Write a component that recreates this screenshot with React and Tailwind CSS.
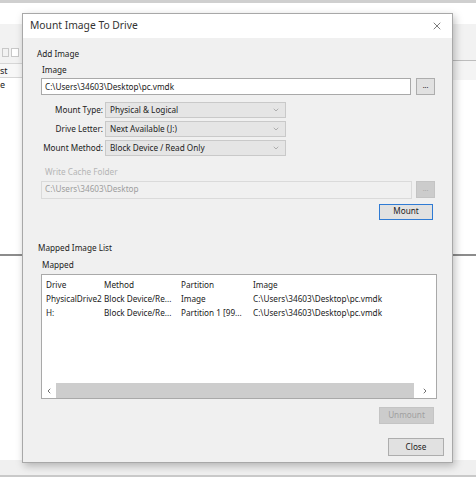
import { ChevronDown, X, ChevronLeft, ChevronRight } from "lucide-react";

const font = { fontFamily: '"Noto Sans", "Open Sans", sans-serif' };

function Select({ value }) {
  return (
    <div className="flex items-center justify-between w-[181px] h-[16px] bg-[#e5e5e5] border border-[#c9c9c9] pl-[4px] pr-[5px]">
      <span>{value}</span>
      <ChevronDown size={8} strokeWidth={1.5} className="text-[#777]" />
    </div>
  );
}

function Field({ label, value }) {
  return (
    <div className="flex items-center h-[16px] mb-[3px]">
      <div className="w-[64px] flex justify-end pr-[2px] whitespace-nowrap">{label}</div>
      <Select value={value} />
    </div>
  );
}

const rows = [
  ["PhysicalDrive2", "Block Device/Re...", "Image", "C:\\Users\\34603\\Desktop\\pc.vmdk"],
  ["H:", "Block Device/Re...", "Partition 1 [99...", "C:\\Users\\34603\\Desktop\\pc.vmdk"],
];

export default function App() {
  return (
    <div className="relative w-[476px] h-[477px] bg-white overflow-hidden text-[8.2px] text-[#222]" style={font}>
      {/* window behind */}
      <div className="h-[3px] bg-[#cfcfcf]" />
      <div className="h-[21px] bg-white" />
      <div className="h-[39px] bg-[#f2f2f2] flex items-end pb-[6px] pl-[2px] gap-[2px]">
        <div className="w-[7px] h-[9px] border border-[#c8c8c8]" />
        <div className="w-[8px] h-[9px] border border-[#c8c8c8] bg-white" />
      </div>
      <div className="h-[15px] border-y border-[#d6d6d6] bg-[#f7f7f7] flex items-center text-[9px]">st</div>
      <div className="h-[14px] flex items-center text-[9px]">e</div>
      <div className="absolute left-0 right-0 top-[254px] h-[2px] bg-[#8c8c8c]" />
      <div className="absolute right-0 top-[60px] w-[24px] h-[20px] border-t border-[#bdbdbd] bg-[#f4f4f4]" />
      <div className="absolute left-0 right-0 bottom-0 h-[17px] bg-[#f0f0f0] border-b-2 border-[#c9c9c9]" />

      {/* dialog */}
      <div className="absolute left-[22px] top-[13px] w-[431px] h-[450px] bg-[#f0f0f0] border border-[#a8a8a8] shadow-[2px_3px_8px_rgba(0,0,0,0.25)] flex flex-col">
        <div className="h-[24px] bg-white flex items-center justify-between pl-[7px] pr-[9px]">
          <span className="text-[10.3px] text-[#333]">Mount Image To Drive</span>
          <X size={12} strokeWidth={1.4} className="text-[#444]" />
        </div>

        <div className="pl-[14px] pt-[12px] leading-none">Add Image</div>
        <div className="pl-[18px] pr-[17px]">
          <div className="pl-[1px] mt-[8px] leading-none">Image</div>
          <div className="flex items-center mt-[4px] gap-[5px]">
            <div className="w-[371px] h-[17px] bg-white border border-[#a9a9a9] flex items-center pl-[3px]">
              C:\Users\34603\Desktop\pc.vmdk
            </div>
            <div className="w-[19px] h-[17px] bg-[#e1e1e1] border border-[#adadad] flex items-center justify-center text-[7px] leading-none pb-[2px]">...</div>
          </div>

          <div className="mt-[7px]">
            <Field label="Mount Type:" value="Physical & Logical" />
            <Field label="Drive Letter:" value="Next Available (J:)" />
            <Field label="Mount Method:" value="Block Device / Read Only" />
          </div>

          <div className="pl-[4px] mt-[12px] leading-none text-[#b5b5b5]">Write Cache Folder</div>
          <div className="flex items-center mt-[4px] gap-[4px]">
            <div className="w-[373px] h-[18px] bg-[#f0f0f0] border border-[#dadada] flex items-center pl-[3px] text-[#9d9d9d]">
              C:\Users\34603\Desktop
            </div>
            <div className="w-[19px] h-[17px] bg-[#cccccc] border border-[#c4c4c4] flex items-center justify-center text-[7px] text-[#aaa] leading-none pb-[2px]">...</div>
          </div>
          <div className="flex justify-end mt-[5px] pr-[2px]">
            <div className="w-[54px] h-[16px] bg-[#e1e1e1] border-[1.5px] border-[#2f7bd4] flex items-center justify-center">Mount</div>
          </div>
        </div>

        <div className="pl-[15px] mt-[24px] leading-none">Mapped Image List</div>
        <div className="pl-[18px] pr-[17px]">
          <div className="pl-[1px] mt-[9px] leading-none">Mapped</div>
          <div className="mt-[5px] w-[396px] h-[125px] bg-white border border-[#a9a9a9] flex flex-col">
            <div className="flex-1 pl-[4px] pt-[3px]">
              <div className="grid grid-cols-[58px_77px_72px_1fr] h-[14px] items-center">
                <span>Drive</span><span>Method</span><span>Partition</span><span>Image</span>
              </div>
              {rows.map((r, i) => (
                <div key={i} className="grid grid-cols-[58px_77px_72px_1fr] h-[14px] items-center">
                  {r.map((c, j) => <span key={j} className="whitespace-nowrap overflow-hidden">{c}</span>)}
                </div>
              ))}
            </div>
            <div className="h-[15px] flex items-center bg-[#f0f0f0]">
              <div className="w-[14px] h-full bg-white flex items-center justify-center">
                <ChevronLeft size={8} strokeWidth={2.5} className="text-[#555]" />
              </div>
              <div className="flex-1 h-full bg-[#cdcdcd]" />
              <div className="w-[22px] h-full bg-white flex items-center justify-center">
                <ChevronRight size={8} strokeWidth={2.5} className="text-[#555]" />
              </div>
            </div>
          </div>
          <div className="flex justify-end mt-[8px] pr-[1px]">
            <div className="w-[55px] h-[17px] bg-[#cccccc] border border-[#c4c4c4] flex items-center justify-center text-[#a0a0a0]">Unmount</div>
          </div>
        </div>
        <div className="flex justify-end mt-[14px] pr-[8px]">
          <div className="w-[56px] h-[18px] bg-[#e1e1e1] border border-[#adadad] flex items-center justify-center">Close</div>
        </div>
      </div>
    </div>
  );
}
